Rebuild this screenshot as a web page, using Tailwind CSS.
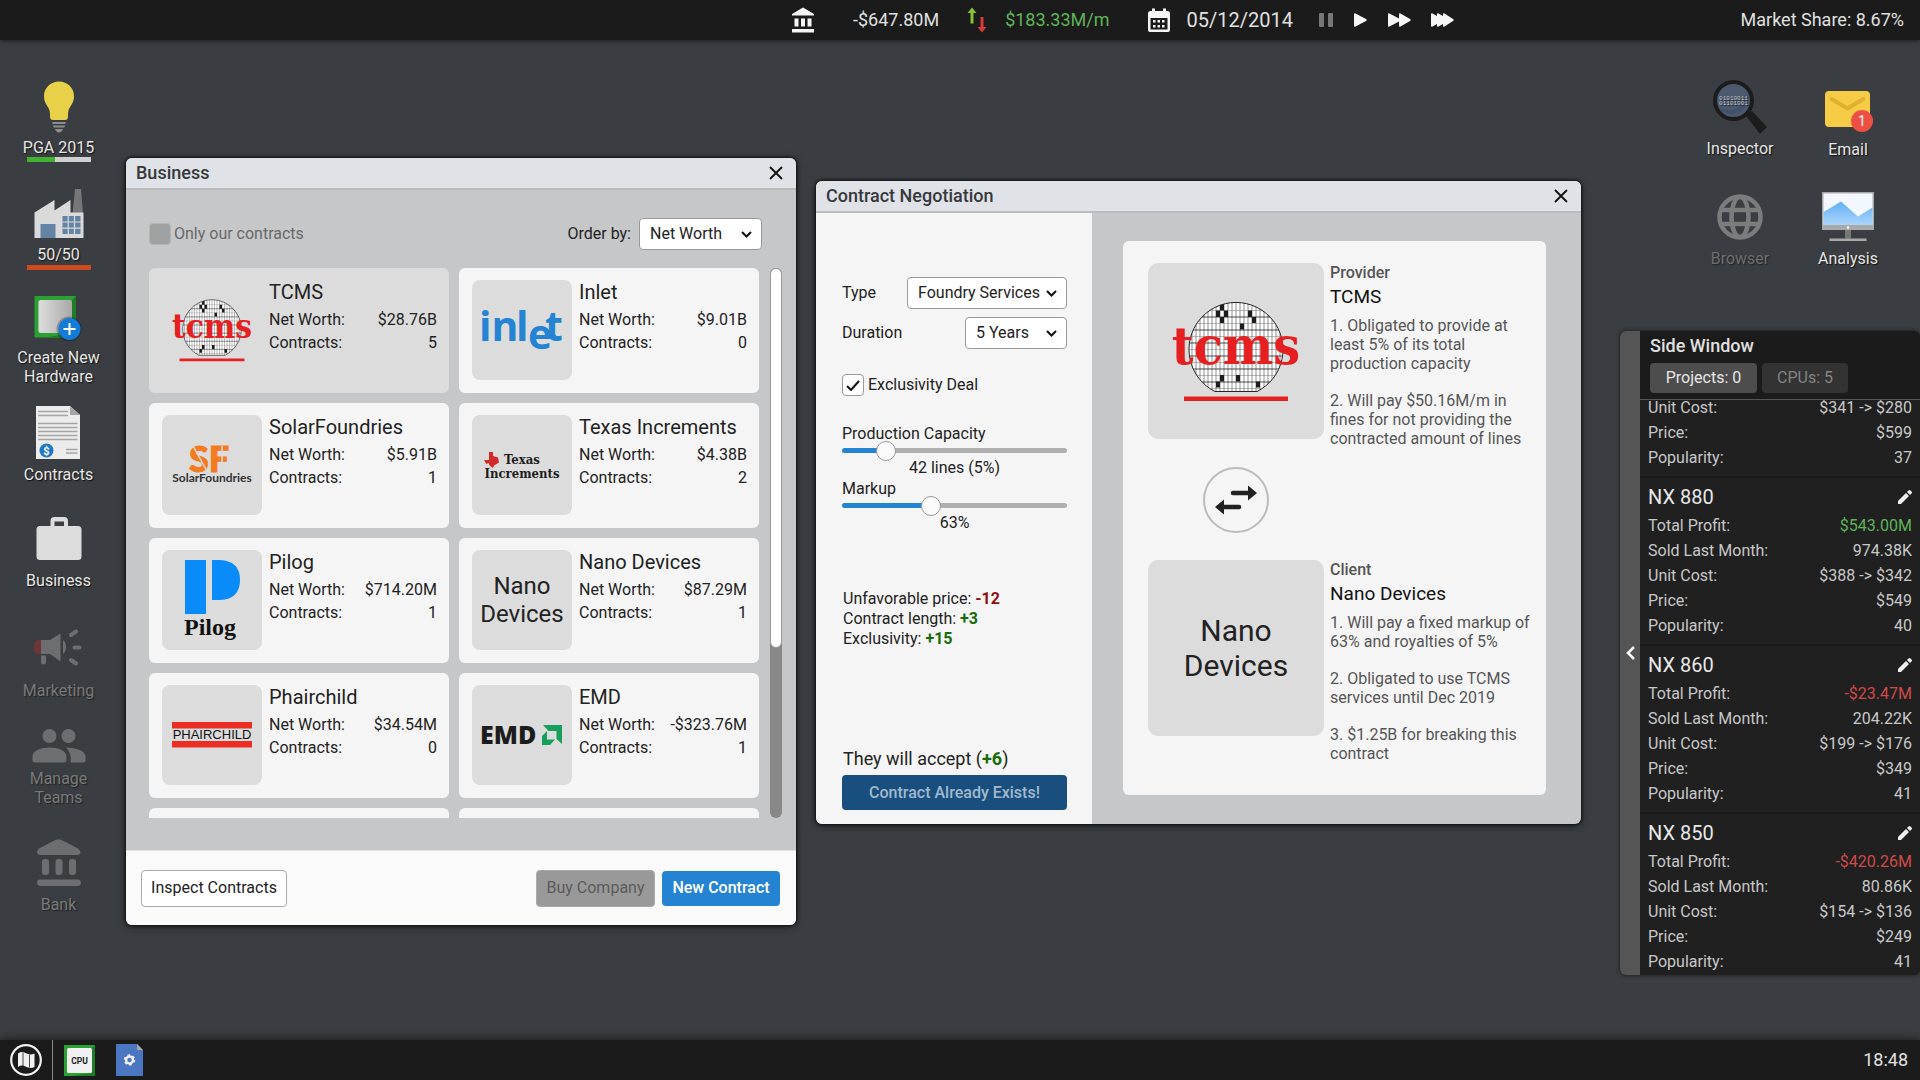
<!DOCTYPE html>
<html lang="en">
<head>
  <meta charset="UTF-8">
  <meta name="viewport" content="width=device-width, initial-scale=1.0">
  <title>Business</title>
  <script src="https://cdn.jsdelivr.net/npm/@tailwindcss/browser@4"></script>
</head>
<body class="bg-[#3a3d41] min-h-screen flex flex-col overflow-hidden text-base text-[#222] font-['Roboto',sans-serif]">

  <!-- Top bar -->
  <header class="relative z-10 flex items-center h-10 shrink-0 bg-[#1b1b1b] pl-[41.25%] pr-4 text-lg text-[#e0e0e0] shadow-[0_1px_4px_rgba(0,0,0,0.5)]">
    <svg class="w-6 h-[26px] mr-[37px]" viewBox="0 0 24 26" fill="#f5f5f5"><path d="M0 7 11 .500 22 7v1.500H0zM2.500 11.500h4v8h-4zM9 11.500h4v8H9zM15.500 11.500h4v8h-4zM0 22h22v3.500H0z"/></svg>
    <span class="mr-7">-$647.80M</span>
    <svg class="w-5 h-[26px] mr-[18px]" viewBox="0 0 20 26"><path d="M5 .500 9.500 6H6.500v10.500h-3V6H.500z" fill="#86c232"/><path d="M15 25.500 10.500 20h3V10h3v10h3z" fill="#d63b34"/></svg>
    <span class="text-[#5fb358] mr-[38px]">$183.33M/m</span>
    <svg class="w-[22px] h-6 mr-[17px]" viewBox="0 0 22 24"><path d="M2.500 3H4V.500h3V3h8V.500h3V3h1.500Q22 3 22 5.500V22q0 2-2 2H2q-2 0-2-2V5.500Q0 3 2.500 3z" fill="#f5f5f5"/><path d="M2.500 10h17v11.500h-17z" fill="#1b1b1b"/><path d="M5 12h2.500v2.500H5zM9.500 12H12v2.500H9.500zM14 12h2.500v2.500H14zM5 17h2.500v2.500H5zM9.500 17H12v2.500H9.500zM14 17h2.500v2.500H14z" fill="#f5f5f5"/></svg>
    <span class="text-xl mr-[26px]">05/12/2014</span>
    <button aria-label="Pause" class="mr-[21px]"><svg class="w-[14px] h-[14px]" viewBox="0 0 14 14" fill="#777"><rect x="0" width="5" height="14" rx="1"/><rect x="9" width="5" height="14" rx="1"/></svg></button>
    <button aria-label="Play" class="mr-[21px]"><svg class="w-[13px] h-[14px]" viewBox="0 0 13 14" fill="#f5f5f5"><path d="M0 1q0-1 1.500-.500L12 6q1.500 1 0 2L1.500 13.500Q0 14 0 13z"/></svg></button>
    <button aria-label="Fast" class="mr-5"><svg class="w-[23px] h-[14px]" viewBox="0 0 23 14" fill="#f5f5f5"><path d="M0 1q0-1 1.500-.500L11 5.500V1q0-1 1.500-.500L22 6q1.500 1 0 2l-9.500 5.500Q11 14 11 13V8.500l-9.500 5Q0 14 0 13z"/></svg></button>
    <button aria-label="Fastest"><svg class="w-[23px] h-[14px]" viewBox="0 0 23 14" fill="#f5f5f5"><path d="M0 1q0-1 1.500-.500L6 3V1q0-1 1.500-.500L12 3V1q0-1 1.500-.500L22 6q1.500 1 0 2l-8.500 5.500Q12 14 12 13v-2l-4.500 2.500Q6 14 6 13v-2l-4.500 2.500Q0 14 0 13z"/></svg></button>
    <span class="ml-auto">Market Share: 8.67%</span>
  </header>

  <main class="relative flex-1 flex items-start">

    <!-- Left desktop icons -->
    <nav class="flex flex-col items-center w-[117px] pt-[41px] text-center leading-[19px] text-[#e6e6e6]">
      <button class="flex flex-col items-center [text-shadow:1px_1px_1px_#111]">
        <svg class="w-8 h-[52px]" viewBox="0 0 32 52"><path d="M16 .500C7.500.500 1 7 1 15c0 6 2.500 8.500 4.500 12 1.500 3 1.500 5 1.500 9q0 3 3 3h12q3 0 3-3c0-4 0-6 1.500-9C28.500 23.500 31 21 31 15 31 7 24.500.500 16 .500z" fill="#e8d048"/><path d="M9.500 41h13v2h-13zM9.500 44.500h13l-1.500 2H11zM12 48h8q-1.500 3.500-4 3.500T12 48z" fill="#8d8d8d"/></svg>
        <span class="mt-[5px]">PGA 2015</span>
        <span class="flex w-16 h-[5px] bg-[#cfcfcf]"><span class="bg-[#44b02f]" style="width:45%"></span></span>
      </button>
      <button class="flex flex-col items-center mt-[26px] [text-shadow:1px_1px_1px_#111]">
        <svg class="w-[50px] h-[51px]" viewBox="0 0 50 51"><path d="M41 1h6l2 25H38.500z" fill="#777"/><path d="M.500 50V24.500L20.500 12v10.500L36.500 12v12.500H49.500V50z" fill="#dadada"/><path d="M6.500 36h15v14h-15z" fill="#6484a4"/><path d="M28.500 28h18v18h-18z" fill="#6484a4"/><path d="M34.200 28v18M40.500 28v18M28.500 34h18M28.500 40.200h18" stroke="#dadada" stroke-width="1.200"/></svg>
        <span class="mt-1.5">50/50</span>
        <span class="w-16 h-[5px] mt-px bg-[#cf4a1f]"></span>
      </button>
      <button class="flex flex-col items-center mt-[25px] [text-shadow:1px_1px_1px_#111]">
        <svg class="w-[50px] h-[46px]" viewBox="0 0 50 46"><defs><linearGradient id="chip"><stop stop-color="#dedede"/><stop offset="1" stop-color="#a8a8a8"/></linearGradient></defs><path d="M.500 1H42v41.500H.500z" fill="#2ba033"/><path d="M42 1v41.500H12L38 38V5z" fill="#1f7d28"/><rect x="4.500" y="5" width="33.500" height="33" rx="2" fill="url(#chip)"/><circle cx="35" cy="34" r="12.500" fill="#000" opacity=".25"/><circle cx="35.500" cy="34" r="11" fill="#147bd8"/><path d="M35.500 28v12M29.500 34h12" stroke="#fff" stroke-width="2"/></svg>
        <span class="mt-[7px] w-[100px]">Create New Hardware</span>
      </button>
      <button class="flex flex-col items-center mt-5 [text-shadow:1px_1px_1px_#111]">
        <svg class="w-11 h-[53px]" viewBox="0 0 44 53"><path d="M0 0h34l10 9v44H0z" fill="#ececec"/><path d="M34 0v9h10z" fill="#a6a6a6"/><path d="M2 5.500h30M2 9.500h30M2 17.500h39.500M2 21.500h39.500M2 25.500h39.500M2 29.500h39.500M2 33.500h39.500M30 43.500h11.500M30 47h11.500" stroke="#a4a4a4" stroke-width="1.500"/><circle cx="10.500" cy="44.500" r="7" fill="#1f78c2"/><text x="10.500" y="48.500" text-anchor="middle" font-size="11" font-weight="700" fill="#fff" style="text-shadow:none">$</text></svg>
        <span class="mt-1.5">Contracts</span>
      </button>
      <button class="flex flex-col items-center mt-[33px] [text-shadow:1px_1px_1px_#111]">
        <svg class="w-[46px] h-[43px]" viewBox="0 0 46 43" fill="#dcdcdc"><path fill-rule="evenodd" d="M14.500 9V4q0-4 4-4h9.500q4 0 4 4v5H42q3.500 0 3.500 3.500V39.500q0 3.500-3.500 3.500H4Q.500 43 .500 39.500V12.500Q.500 9 4 9zM18.500 9H28V4.500h-9.500z"/></svg>
        <span class="mt-[11px]">Business</span>
      </button>
      <button class="flex flex-col items-center mt-[39px] text-[#77797b] [text-shadow:1px_1px_1px_#222]">
        <svg class="w-12 h-[38px]" viewBox="0 0 48 38" fill="#6c6e71"><path d="M7 11v14H5q-5 0-5-5v-4q0-5 5-5z" fill="#703538"/><path d="M7 11h9L26.500 4.500V32.500L16 25H7zM7 26.500h5V33q0 2.500-2.500 2.500T7 33zM29 11q3 2 3 7t-3 7z"/><path d="M37 6l5-3.500M40.500 18.500h5M37 31l5 3.500" stroke="#6c6e71" stroke-width="4" stroke-linecap="round"/></svg>
        <span class="mt-[14px]">Marketing</span>
      </button>
      <button class="flex flex-col items-center mt-[29px] text-[#77797b] [text-shadow:1px_1px_1px_#222]">
        <svg class="w-[54px] h-[34px]" viewBox="0 0 54 34" fill="#6c6e71"><circle cx="17.500" cy="7" r="7"/><circle cx="36.500" cy="7" r="7"/><path d="M.500 27.500C.500 21.500 9 18.500 17.500 18.500S34.500 21.500 34.500 27.500V31q0 2.500-2.500 2.500H3Q.500 33.500.500 31zM34 18.500c11 0 19.500 3.500 19.500 9V31q0 2.500-2.500 2.500H38.500q1.500-9-4.500-15z"/></svg>
        <span class="mt-1.5 w-20">Manage Teams</span>
      </button>
      <button class="flex flex-col items-center mt-8 text-[#77797b] [text-shadow:1px_1px_1px_#222]">
        <svg class="w-11 h-[47px]" viewBox="0 0 44 47" fill="#6c6e71"><path d="M19 .800q3-1.200 5 0L41 9.500q5.500 5.500-.500 6.500H3Q-2.500 15 2 9.500zM3 40.500h38q3 .500 3 3t-3 3.500H3q-3-.500-3-3.500t3-3z"/><rect x="5" y="20" width="7" height="16" rx="3"/><rect x="18.500" y="20" width="7" height="16" rx="3"/><rect x="32" y="20" width="7" height="16" rx="3"/></svg>
        <span class="mt-[9px]">Bank</span>
      </button>
    </nav>

    <!-- Right desktop icons -->
    <nav class="grid grid-cols-2 w-[216px] ml-auto mr-[18px] pt-10 gap-y-[33px] leading-[19px] text-[#e6e6e6]">
      <button class="flex flex-col items-center justify-end [text-shadow:1px_1px_1px_#111]">
        <svg class="w-[54px] h-[54px]" viewBox="0 0 54 54"><path d="M33 36l6-5 15 16-7 7z" fill="#1c1c1c"/><circle cx="20.500" cy="20.500" r="18.500" fill="#4b5a6e" stroke="#1c1c1c" stroke-width="4"/><path d="M35 14a16.500 16.500 0 0 1-29 14q22 8 29-14z" fill="#42516a"/><text x="20.500" y="20" text-anchor="middle" font-family="Liberation Mono" font-size="6" fill="#c8ced6">01010011</text><text x="20.500" y="25" text-anchor="middle" font-family="Liberation Mono" font-size="6" fill="#c8ced6">01101001</text></svg>
        <span class="mt-[5px] mb-px">Inspector</span>
      </button>
      <button class="flex flex-col items-center justify-end [text-shadow:1px_1px_1px_#111]">
        <svg class="w-[50px] h-[42px]" viewBox="0 0 50 42"><rect x="2" y="0" width="45" height="36" rx="4" fill="#f6cb46"/><path d="M8.500 8 24.500 17.500 40.500 8" fill="none" stroke="#dfb12c" stroke-width="4" stroke-linecap="round" stroke-linejoin="round"/><circle cx="39" cy="30" r="11" fill="#ee4f43"/><text x="39" y="34.500" text-anchor="middle" font-size="14" fill="#fff" style="text-shadow:none">1</text></svg>
        <span class="mt-[7px]">Email</span>
      </button>
      <button class="flex flex-col items-center justify-end text-[#6c6e71] [text-shadow:1px_1px_1px_#222]">
        <svg class="w-[46px] h-[46px]" viewBox="0 0 46 46" fill="none" stroke="#7a7c7e" stroke-width="4.500"><circle cx="23" cy="23" r="20.500"/><ellipse cx="23" cy="23" rx="8.500" ry="20"/><path d="M4 16h38M4 30h38"/></svg>
        <span class="mt-[9px]">Browser</span>
      </button>
      <button class="flex flex-col items-center justify-end [text-shadow:1px_1px_1px_#111]">
        <svg class="w-[52px] h-[50px]" viewBox="0 0 52 50"><defs><linearGradient id="wave" x2="0" y2="1"><stop stop-color="#62aff5"/><stop offset="1" stop-color="#abd5fb"/></linearGradient></defs><path d="M0 0h52v38H0z" fill="#a9a9a9"/><path d="M1.500 1.500h49v31.500h-49z" fill="#f3f7ff"/><path d="M1.500 20 19 9.500l17 15 14.500-9V33h-49z" fill="url(#wave)"/><circle cx="26" cy="35.500" r="1.300" fill="#fff"/><path d="M23 38h6v8.500h-6z" fill="#777"/><path d="M7.500 46.500h37V49h-37z" fill="#a9a9a9"/></svg>
        <span class="mt-[7px]">Analysis</span>
      </button>
    </nav>

    <!-- Business window -->
    <section class="absolute left-[126px] top-[118px] w-[670px] rounded-md overflow-hidden bg-[#c6c7c9] shadow-[0_0_3px_1px_rgba(0,0,0,0.7),0_2px_8px_rgba(0,0,0,0.4)]">
      <div class="flex items-center justify-between h-8 pl-[10px] pr-[13px] bg-[#dfe2e7] border-b-2 border-[#b9bbbd]">
        <h2 class="text-lg font-medium text-[#36383b]">Business</h2>
        <button aria-label="Close business"><svg class="w-[14px] h-[14px]" viewBox="0 0 14 14" stroke="#111" stroke-width="1.800"><path d="M1 1l12 12M13 1 1 13"/></svg></button>
      </div>
      <div class="pl-[23px] pr-[14px] pt-[28px] pb-8">
        <div class="flex items-center pr-5">
          <input id="ourContracts" type="checkbox" disabled class="appearance-none w-[22px] h-[22px] rounded border border-[#b4b6b6] bg-[#9fa1a1]">
          <label for="ourContracts" class="ml-[3px] text-[#68696b]">Only our contracts</label>
          <label for="orderBy" class="ml-auto mr-2">Order by:</label>
          <div class="relative">
            <select id="orderBy" class="appearance-none block w-[123px] h-8 pl-[10px] rounded bg-white border border-[#999]"><option>Net Worth</option></select>
            <svg class="absolute right-[10px] top-3 w-[11px] h-[9px] pointer-events-none" viewBox="0 0 11 9" fill="none" stroke="#111" stroke-width="2"><path d="M1 2l4.500 4.500L10 2"/></svg>
          </div>
        </div>
        <div class="flex justify-between mt-[18px] h-[550px]">
          <div id="companies" class="grid grid-cols-[300px_300px] auto-rows-[125px] gap-[10px] overflow-hidden"></div>
          <div class="w-3 rounded-full bg-[#878787]"><div class="w-3 rounded-full bg-white border border-[#999]" style="height:69%"></div></div>
        </div>
      </div>
      <div class="flex items-center h-[75px] pl-[15px] pr-4 bg-[#fafafa] border-t border-[#e2e2e2]">
        <button class="w-[146px] h-[37px] rounded bg-white border border-[#aaa]">Inspect Contracts</button>
        <button disabled class="ml-auto w-[119px] h-[37px] rounded bg-[#999] border border-[#aaa] text-[#5b5b5b]">Buy Company</button>
        <button class="ml-[7px] w-[118px] h-[35px] rounded bg-[#2583d3] font-medium text-white">New Contract</button>
      </div>
    </section>

    <!-- Contract negotiation window -->
    <section class="absolute left-[816px] top-[141px] w-[765px] rounded-md overflow-hidden bg-[#c6c7c9] shadow-[0_0_3px_1px_rgba(0,0,0,0.7),0_2px_8px_rgba(0,0,0,0.4)]">
      <div class="flex items-center justify-between h-8 pl-[10px] pr-[13px] bg-[#dfe2e7] border-b-2 border-[#b9bbbd]">
        <h2 class="text-lg font-medium text-[#36383b]">Contract Negotiation</h2>
        <button aria-label="Close negotiation"><svg class="w-[14px] h-[14px]" viewBox="0 0 14 14" stroke="#111" stroke-width="1.800"><path d="M1 1l12 12M13 1 1 13"/></svg></button>
      </div>
      <div class="flex">
        <form class="flex flex-col w-[276px] pt-16 pb-[14px] pl-[26px] pr-[25px] leading-5 bg-[#f5f5f5]">
          <div class="flex items-center justify-between">
            <label for="type">Type</label>
            <div class="relative">
              <select id="type" class="appearance-none block w-[160px] h-8 pl-[10px] rounded bg-white border border-[#999]"><option>Foundry Services</option></select>
              <svg class="absolute right-[10px] top-3 w-[11px] h-[9px] pointer-events-none" viewBox="0 0 11 9" fill="none" stroke="#111" stroke-width="2"><path d="M1 2l4.500 4.500L10 2"/></svg>
            </div>
          </div>
          <div class="flex items-center justify-between mt-2">
            <label for="duration">Duration</label>
            <div class="relative">
              <select id="duration" class="appearance-none block w-[102px] h-8 pl-[10px] rounded bg-white border border-[#999]"><option>5 Years</option></select>
              <svg class="absolute right-[10px] top-3 w-[11px] h-[9px] pointer-events-none" viewBox="0 0 11 9" fill="none" stroke="#111" stroke-width="2"><path d="M1 2l4.500 4.500L10 2"/></svg>
            </div>
          </div>
          <div class="flex items-center mt-[25px]">
            <div class="relative">
              <input id="exclusive" type="checkbox" checked class="appearance-none block w-[22px] h-[22px] rounded bg-white border border-[#999]">
              <svg class="absolute left-1 top-1.5 w-[14px] h-[11px] pointer-events-none" viewBox="0 0 14 11" fill="none" stroke="#111" stroke-width="2"><path d="M1 6l4 4 8-9"/></svg>
            </div>
            <label for="exclusive" class="ml-1">Exclusivity Deal</label>
          </div>
          <label for="capacity" class="mt-7">Production Capacity</label>
          <input id="capacity" type="range" min="0" max="250" value="42" class="appearance-none block w-full h-[5px] mt-1 rounded-full [&::-webkit-slider-thumb]:appearance-none [&::-webkit-slider-thumb]:w-5 [&::-webkit-slider-thumb]:h-5 [&::-webkit-slider-thumb]:rounded-full [&::-webkit-slider-thumb]:bg-[#fafafa] [&::-webkit-slider-thumb]:border [&::-webkit-slider-thumb]:border-[#999]" style="background:linear-gradient(90deg,#2583d3 20%,#b0b0b0 20%)">
          <output for="capacity" class="mt-[5px] text-center">42 lines (5%)</output>
          <label for="markup" class="mt-px">Markup</label>
          <input id="markup" type="range" min="0" max="164" value="63" class="appearance-none block w-full h-[5px] mt-1 rounded-full [&::-webkit-slider-thumb]:appearance-none [&::-webkit-slider-thumb]:w-5 [&::-webkit-slider-thumb]:h-5 [&::-webkit-slider-thumb]:rounded-full [&::-webkit-slider-thumb]:bg-[#fafafa] [&::-webkit-slider-thumb]:border [&::-webkit-slider-thumb]:border-[#999]" style="background:linear-gradient(90deg,#2583d3 39%,#b0b0b0 39%)">
          <output for="markup" class="mt-[5px] text-center">63%</output>
          <ul class="mt-14 pl-px">
            <li>Unfavorable price: <b class="text-[#8f0f0f]">-12</b></li>
            <li>Contract length: <b class="text-[#176b0b]">+3</b></li>
            <li>Exclusivity: <b class="text-[#176b0b]">+15</b></li>
          </ul>
          <p class="mt-auto mb-[5px] pl-px text-lg leading-[22px]">They will accept (<b class="text-[#176b0b]">+6</b>)</p>
          <button type="button" disabled class="h-[35px] rounded bg-[#184f7e] font-medium text-[#a3b9ce]">Contract Already Exists!</button>
        </form>
        <div class="flex-1 pt-7 pb-[29px] pl-[31px] pr-[35px]">
          <div class="rounded-md bg-[#f5f5f5] pt-[22px] pb-8 pl-[25px] pr-2">
            <div class="flex gap-1.5">
              <div class="flex items-center justify-center shrink-0 w-44 h-44 rounded-[10px] bg-[#dcdcdc]">
                <svg id="providerLogo" class="w-32 h-32 overflow-visible" viewBox="24 24 128 128"></svg>
              </div>
              <div class="leading-[19px] text-[#555]">
                <h3 class="leading-5 font-medium">Provider</h3>
                <p class="mt-0.5 text-[19px] leading-6 text-[#111]">TCMS</p>
                <p class="mt-[7px]">1. Obligated to provide at least 5% of its total production capacity</p>
                <p class="mt-[18px]">2. Will pay $50.16M/m in fines for not providing the contracted amount of lines</p>
              </div>
            </div>
            <div class="flex justify-center w-44 mt-[19px] mb-[27px]">
              <button aria-label="Swap sides" class="flex items-center justify-center w-[66px] h-[66px] rounded-full border-2 border-[#bbb]">
                <svg class="w-[42px] h-[30px]" viewBox="0 0 42 30"><path d="M18 8h16M8 22h16" stroke="#222" stroke-width="4.500" stroke-linecap="round"/><path d="M33 .500 42 8l-9 7.500zM9 14.500 0 22l9 7.500z" fill="#222"/></svg>
              </button>
            </div>
            <div class="flex gap-1.5">
              <div class="flex items-center justify-center shrink-0 w-44 h-44 rounded-[10px] bg-[#dcdcdc] text-3xl leading-[35px] text-center">Nano<br>Devices</div>
              <div class="leading-[19px] text-[#555]">
                <h3 class="leading-5 font-medium">Client</h3>
                <p class="mt-0.5 text-[19px] leading-6 text-[#111]">Nano Devices</p>
                <p class="mt-[7px]">1. Will pay a fixed markup of 63% and royalties of 5%</p>
                <p class="mt-[18px]">2. Obligated to use TCMS services until Dec 2019</p>
                <p class="mt-[18px]">3. $1.25B for breaking this contract</p>
              </div>
            </div>
          </div>
        </div>
      </div>
    </section>

    <!-- Side window -->
    <aside class="absolute right-0 top-[291px] flex w-[300px] h-[644px] rounded-md overflow-hidden bg-[#1b1b1b] text-[#c8c8c8] shadow-[0_0_4px_rgba(0,0,0,0.6)]">
      <button aria-label="Collapse" class="flex items-center justify-center w-5 shrink-0 bg-[#555]">
        <svg class="w-[9px] h-[14px]" viewBox="0 0 9 14" fill="none" stroke="#fff" stroke-width="2.500"><path d="M8 1 2 7l6 6"/></svg>
      </button>
      <div class="flex flex-col flex-1 min-h-0">
        <div class="shrink-0 pt-1 pb-1.5 px-[10px] border-b border-[#555]">
          <h2 class="text-lg leading-[22px] font-medium text-[#e0e0e0]">Side Window</h2>
          <div class="flex gap-[5px] mt-1.5">
            <button class="w-[107px] h-[30px] rounded bg-[#4d4d4d] text-[#e6e6e6]">Projects: 0</button>
            <button class="w-[86px] h-[30px] rounded bg-[#333] text-[#848484]">CPUs: 5</button>
          </div>
        </div>
        <div id="products" class="flex flex-col justify-end flex-1 min-h-0 overflow-hidden bg-[#202020]"></div>
      </div>
    </aside>
  </main>

  <!-- Taskbar -->
  <footer class="relative z-10 flex items-center h-10 shrink-0 bg-[#1b1b1b] pl-[10px] pr-3 shadow-[0_-2px_8px_rgba(0,0,0,0.45)]">
    <button aria-label="Start"><svg class="w-8 h-8" viewBox="0 0 32 32"><circle cx="16" cy="16" r="14.800" fill="none" stroke="#f2f2f2" stroke-width="2.200"/><path d="M8 9.500q3.500-2.500 7.500-.500 4.500 2.500 9 .500v13.500q-4.500 2-9-.500-4-2-7.500.500z" fill="#f2f2f2"/><path d="M13 8.500v13.500M19.500 10.500v13" stroke="#1b1b1b" stroke-width=".800"/></svg></button>
    <span class="w-px h-10 ml-[10px] mr-[11px] bg-[#888]"></span>
    <button aria-label="CPU"><svg class="w-[31px] h-[31px]" viewBox="0 0 31 31"><path d="M0 0h31v31H0z" fill="#2ba033"/><path d="M31 0v31H8L28 28V3z" fill="#1f7d28"/><rect x="3" y="3" width="25" height="25" rx="1.500" fill="#f0f0f0"/><text x="15.500" y="18.500" text-anchor="middle" font-size="8.500" font-weight="700" fill="#1c1c1c">CPU</text></svg></button>
    <button aria-label="Documents" class="ml-[21px]"><svg class="w-[27px] h-8" viewBox="0 0 27 32"><path d="M0 0h21l6 6v26H0z" fill="#4b76c1"/><path d="M21 0v6h6z" fill="#a8a8a8"/><circle cx="13.500" cy="16" r="3.500" fill="none" stroke="#eee" stroke-width="2.500"/><circle cx="13.500" cy="16" r="4.800" fill="none" stroke="#eee" stroke-width="1.800" stroke-dasharray="2.500 2.526"/></svg></button>
    <time class="ml-auto text-lg text-[#e0e0e0]">18:48</time>
  </footer>

  <script>
    const tcmsLogo = `
      <clipPath id="globe"><path d="M67 128.500A47 47 0 1 1 109 128.500z"/></clipPath>
      <path d="M67 128.500A47 47 0 1 1 109 128.500z" fill="#fff"/>
      <g clip-path="url(#globe)">
        <path d="M44 38v92M48 38v92M52 38v92M56 38v92M60 38v92M64 38v92M68 38v92M72 38v92M76 38v92M80 38v92M84 38v92M88 38v92M92 38v92M96 38v92M100 38v92M104 38v92M108 38v92M112 38v92M116 38v92M120 38v92M124 38v92M128 38v92M132 38v92" stroke="#222" stroke-width=".500"/>
        <path d="M40 47.500h96M40 60.500h96M40 73.500h96M40 86.500h96M40 99.500h96M40 112.500h96M40 125.500h96" stroke="#777" stroke-width=".500"/>
        <path d="M40 54h96M40 67h96M40 80h96M40 93h96M40 106h96M40 119h96" stroke="#222" stroke-width=".800"/>
        <path d="M72 41h4v6.500h-4zM68 47.500h4V54h-4zM76 47.500h4V54h-4zM72 54h4v6h-4zM100 47.500h4V54h-4zM104 54h4v6h-4zM92 60.500h4v6h-4zM72 112h4v6.500h-4zM68 118.500h4v6h-4zM88 112h4v6.500h-4zM108 118.500h4v6h-4z" fill="#1c1c1c"/>
      </g>
      <path d="M67 128.500A47 47 0 1 1 109 128.500z" fill="none" stroke="#222"/>
      <text x="88" y="101" text-anchor="middle" font-family="DejaVu Serif Condensed, Liberation Serif" font-size="53" font-weight="700" fill="#e62020">tcms</text>
      <path d="M36 133.500h104v4.500H36z" fill="#e62020"/>`;

    const logos = {
      tcms: `<svg class="w-20 h-20 overflow-visible" viewBox="24 24 128 128">${tcmsLogo}</svg>`,
      inlet: `<svg class="w-20 h-20 overflow-visible" viewBox="0 0 80 80" font-family="Open Sans" font-size="41" font-weight="700" fill="#2583d3"><text x="-3" y="51">in</text><text x="34" y="51">l</text><text x="46" y="59">e</text><text x="63" y="51">t</text></svg>`,
      solar: `<svg class="w-20 h-20 overflow-visible" viewBox="0 0 80 80"><text x="17" y="47" font-family="Lato" font-size="36" font-weight="900" fill="#f47b20" stroke="#f47b20">SF</text><path d="M21 21l15 27M50 21v27" stroke="#dcdcdc" stroke-width="1.500"/><text x="40" y="57" text-anchor="middle" font-family="Lato" font-size="12" font-weight="700" fill="#333">SolarFoundries</text></svg>`,
      texas: `<svg class="w-20 h-20 overflow-visible" viewBox="0 0 80 80" font-family="DejaVu Serif Condensed, Liberation Serif" font-size="13" font-weight="700" fill="#1c1c1c"><path d="M7 27h4v4l5 1.500 1 5-5 3-1 2.500-3-2-1.500-3-2 1L2 35h5z" fill="#d42a2a"/><text x="40" y="39" text-anchor="middle">Texas</text><text x="40" y="53" text-anchor="middle">Increments</text></svg>`,
      pilog: `<svg class="w-20 h-20 overflow-visible" viewBox="0 0 80 80"><path d="M13 0h21v54H13zM40 0h8q20 1 20 20T48 40h-8z" fill="#0a8bfa"/><text x="38" y="75" text-anchor="middle" font-family="Liberation Serif" font-size="24" font-weight="700" fill="#111">Pilog</text></svg>`,
      nano: `<span class="text-2xl leading-7 text-center">Nano<br>Devices</span>`,
      phairchild: `<svg class="w-20 h-20 overflow-visible" viewBox="0 0 80 80"><path d="M0 27h80v6.500H0zM0 46h80v6.500H0z" fill="#ec2d24"/><text x="40" y="44" text-anchor="middle" font-family="Liberation Sans" font-size="13" fill="#111">PHAIRCHILD</text></svg>`,
      emd: `<svg class="w-20 h-20 overflow-visible" viewBox="0 0 80 80"><text x="-2" y="49" font-family="Open Sans" font-size="25" font-weight="800" fill="#1c1c1c">EMD</text><path d="M61 30h19v19l-5.500-5V36h-8zM60 41l5-5v8.500h8L68 50h-8z" fill="#17a05d"/></svg>`,
    };

    const companies = [
      ['TCMS', '$28.76B', 5, logos.tcms],
      ['Inlet', '$9.01B', 0, logos.inlet],
      ['SolarFoundries', '$5.91B', 1, logos.solar],
      ['Texas Increments', '$4.38B', 2, logos.texas],
      ['Pilog', '$714.20M', 1, logos.pilog],
      ['Nano Devices', '$87.29M', 1, logos.nano],
      ['Phairchild', '$34.54M', 0, logos.phairchild],
      ['EMD', '-$323.76M', 1, logos.emd],
    ];

    const companyCard = ([name, worth, contracts, logo], i) => `
      <article class="flex gap-[7px] pt-3 pl-[13px] pr-3 rounded-md ${i === 0 ? 'bg-[#dcdcdc]' : 'bg-[#f5f5f5]'}">
        <div class="flex items-center justify-center shrink-0 w-[100px] h-[100px] rounded-lg bg-[#dcdcdc]">${logo}</div>
        <div class="flex-1">
          <h3 class="mb-1 text-xl leading-6">${name}</h3>
          <dl class="grid grid-cols-[auto_auto] justify-between leading-[23px]">
            <dt>Net Worth:</dt><dd class="text-right">${worth}</dd>
            <dt>Contracts:</dt><dd class="text-right">${contracts}</dd>
          </dl>
        </div>
      </article>`;

    document.getElementById('companies').innerHTML =
      companies.map(companyCard).join('') + '<article class="rounded-md bg-[#f5f5f5]"></article>'.repeat(2);
    document.getElementById('providerLogo').innerHTML = tcmsLogo;

    const products = [
      ['', '', '', '', '$341 -> $280', '$599', 37],
      ['NX 880', '$543.00M', 'text-[#5fb358]', '974.38K', '$388 -> $342', '$549', 40],
      ['NX 860', '-$23.47M', 'text-[#d04a48]', '204.22K', '$199 -> $176', '$349', 41],
      ['NX 850', '-$420.26M', 'text-[#d04a48]', '80.86K', '$154 -> $136', '$249', 41],
    ];

    const productRow = ([name, profit, color, sold, cost, price, popularity]) => `
      <article class="shrink-0 mt-[5px] px-2 pb-px ${name ? 'border-t-2 border-[#1a1a1a]' : ''}">
        ${name ? `<div class="flex items-center justify-between pt-[3px]">
          <h3 class="text-xl leading-8 text-[#e8e8e8]">${name}</h3>
          <button aria-label="Edit ${name}"><svg class="w-[14px] h-[14px]" viewBox="0 0 14 14" fill="#f0f0f0"><path d="M0 11 8 3l3 3-8 8H0zM9 2l1.500-1.500q1-1 2 0l1 1q1 1 0 2L12 5z"/></svg></button>
        </div>` : ''}
        <dl class="grid grid-cols-[auto_auto] justify-between leading-[25px]">
          ${name ? `<dt>Total Profit:</dt><dd class="text-right ${color}">${profit}</dd>
          <dt>Sold Last Month:</dt><dd class="text-right">${sold}</dd>` : ''}
          <dt>Unit Cost:</dt><dd class="text-right">${cost}</dd>
          <dt>Price:</dt><dd class="text-right">${price}</dd>
          <dt>Popularity:</dt><dd class="text-right">${popularity}</dd>
        </dl>
      </article>`;

    document.getElementById('products').innerHTML = products.map(productRow).join('');
  </script>
</body>
</html>
